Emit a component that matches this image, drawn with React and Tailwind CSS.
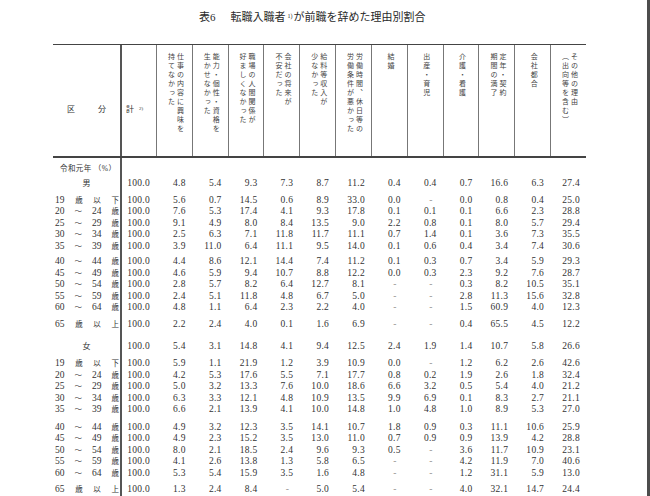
import React from "react";

// 表6 転職入職者が前職を辞めた理由別割合
const heads = [
  ["仕事の内容に興味を", "持てなかった"],
  ["能力・個性・資格を", "生かせなかった"],
  ["職場の人間関係が", "好ましくなかった"],
  ["会社の将来が", "不安だった"],
  ["給料等収入が", "少なかった"],
  ["労働時間、休日等の", "労働条件が悪かった"],
  ["結婚"],
  ["出産・育児"],
  ["介護・看護"],
  ["定年・契約", "期間の満了"],
  ["会社都合"],
  ["その他の理由", "（出向等を含む）"],
];

const ages = [
  ["19", "歳", "以", "下"],
  ["20", "～", "24", "歳"],
  ["25", "～", "29", "歳"],
  ["30", "～", "34", "歳"],
  ["35", "～", "39", "歳"],
  ["40", "～", "44", "歳"],
  ["45", "～", "49", "歳"],
  ["50", "～", "54", "歳"],
  ["55", "～", "59", "歳"],
  ["60", "～", "64", "歳"],
  ["65", "歳", "以", "上"],
];

const men = {
  label: "男",
  total: "100.0 4.8 5.4 9.3 7.3 8.7 11.2 0.4 0.4 0.7 16.6 6.3 27.4",
  rows: [
    "100.0 5.6 0.7 14.5 0.6 8.9 33.0 0.0 - 0.0 0.8 0.4 25.0",
    "100.0 7.6 5.3 17.4 4.1 9.3 17.8 0.1 0.1 0.1 6.6 2.3 28.8",
    "100.0 9.1 4.9 8.0 8.4 13.5 9.0 2.2 0.8 0.1 8.0 5.7 29.4",
    "100.0 2.5 6.3 7.1 11.8 11.7 11.1 0.7 1.4 0.1 3.6 7.3 35.5",
    "100.0 3.9 11.0 6.4 11.1 9.5 14.0 0.1 0.6 0.4 3.4 7.4 30.6",
    "100.0 4.4 8.6 12.1 14.4 7.4 11.2 0.1 0.3 0.7 3.4 5.9 29.3",
    "100.0 4.6 5.9 9.4 10.7 8.8 12.2 0.0 0.3 2.3 9.2 7.6 28.7",
    "100.0 2.8 5.7 8.2 6.4 12.7 8.1 - - 0.3 8.2 10.5 35.1",
    "100.0 2.4 5.1 11.8 4.8 6.7 5.0 - - 2.8 11.3 15.6 32.8",
    "100.0 4.8 1.1 6.4 2.3 2.2 4.0 - - 1.5 60.9 4.0 12.3",
    "100.0 2.2 2.4 4.0 0.1 1.6 6.9 - - 0.4 65.5 4.5 12.2",
  ],
  pads: ["pt-[3.5px]", "pt-[5.2px]", "pt-[3.8px]", "pt-[5.5px]"],
};

const women = {
  label: "女",
  total: "100.0 5.4 3.1 14.8 4.1 9.4 12.5 2.4 1.9 1.4 10.7 5.8 26.6",
  rows: [
    "100.0 5.9 1.1 21.9 1.2 3.9 10.9 0.0 - 1.2 6.2 2.6 42.6",
    "100.0 4.2 5.3 17.6 5.5 7.1 17.7 0.8 0.2 1.9 2.6 1.8 32.4",
    "100.0 5.0 3.2 13.3 7.6 10.0 18.6 6.6 3.2 0.5 5.4 4.0 21.2",
    "100.0 6.3 3.3 12.1 4.8 10.9 13.5 9.9 6.9 0.1 8.3 2.7 21.1",
    "100.0 6.6 2.1 13.9 4.1 10.0 14.8 1.0 4.8 1.0 8.9 5.3 27.0",
    "100.0 4.9 3.2 12.3 3.5 14.1 10.7 1.8 0.9 0.3 11.1 10.6 25.9",
    "100.0 4.9 2.3 15.2 3.5 13.0 11.0 0.7 0.9 0.9 13.9 4.2 28.8",
    "100.0 8.0 2.1 18.5 2.4 9.6 9.3 0.5 - 3.6 11.7 10.9 23.1",
    "100.0 4.1 2.6 13.8 1.3 5.8 6.5 - - 4.2 11.9 7.0 40.6",
    "100.0 5.3 5.4 15.9 3.5 1.6 4.8 - - 1.2 31.1 5.9 13.0",
    "100.0 1.3 2.4 8.4 - 5.0 5.4 - - 4.0 32.1 14.7 24.4",
  ],
  pads: ["pt-[10.2px]", "pt-[5.8px]", "pt-[6.2px]", "pt-[4.8px]"],
};

const cols = "grid grid-cols-[67px_36px_repeat(12,minmax(0,1fr))]";

function Row({ label, vals, pad = "" }) {
  return (
    <div className={`${cols} leading-[11.5px]`}>
      <div className={pad}>{label}</div>
      {vals.map((v, i) => (
        <div
          key={i}
          className={`${pad} text-right text-[9.5px] tracking-[0.3px] ${
            i === 0 ? "border-l-2 border-[#555]" : ""
          } ${v === "-" ? "pr-[10px] text-[#999]" : "pr-[6px]"}`}
        >
          {v}
        </div>
      ))}
    </div>
  );
}

function AgeLabel({ parts }) {
  return (
    <div className="flex justify-between pl-[2px] pr-[1px]">
      {parts.map((p, i) => (
        <span key={i} className={/\d/.test(p) ? "text-[9.5px]" : "text-[7.5px]"}>
          {p}
        </span>
      ))}
    </div>
  );
}

function Block({ data }) {
  return (
    <>
      <Row
        label={<div className="text-center text-[8px]">{data.label}</div>}
        vals={data.total.split(" ")}
        pad={data.pads[0]}
      />
      {ages.map((a, i) => (
        <Row
          key={i}
          label={<AgeLabel parts={a} />}
          vals={data.rows[i].split(" ")}
          pad={i === 0 ? data.pads[1] : i === 5 ? data.pads[2] : i === 10 ? data.pads[3] : ""}
        />
      ))}
    </>
  );
}

export default function App() {
  return (
    <div className="w-[650px] h-[496px] overflow-hidden bg-white flex text-[#333] font-['Liberation_Serif','Noto_Sans_CJK_JP',serif]">
      <div className="flex-1 min-w-0">
        <div className="h-[44px] pt-[10px] pl-[199px] text-[11px] leading-[14px] text-[#2a2a2a]">
          表6<span className="ml-[15px]">転職入職者</span>
          <sup className="text-[6px] ml-[2px] mr-[1px]">1)</sup>が前職を辞めた理由別割合
        </div>

        <div className="ml-[53px] w-[533px]">
          <div className={`${cols} h-[114px] border-t border-b-2 border-[#444]`}>
            <div className="flex justify-between px-[14px] pt-[60px] text-[8px] leading-[10px]">
              <span>区</span>
              <span>分</span>
            </div>
            <div className="border-l-2 border-[#555] pl-[4px] pt-[60px] text-[8px] leading-[10px]">
              計<sup className="text-[5px] ml-[5px]">2)</sup>
            </div>
            {heads.map((h, i) => (
              <div key={i} className="border-l border-[#777] flex justify-center pt-[8px]">
                <div className="[writing-mode:vertical-rl] h-[100px] text-[7px] tracking-[2px] leading-[9px] text-[#444]">
                  {h.map((l, j) => (
                    <React.Fragment key={j}>
                      {j > 0 && <br />}
                      {l}
                    </React.Fragment>
                  ))}
                </div>
              </div>
            ))}
          </div>

          <Row
            label={<div className="pl-[7px] text-[7.5px] tracking-[0.4px]">令和元年 （%）</div>}
            vals={Array(13).fill("")}
            pad="pt-[5.25px]"
          />
          <Block data={men} />
          <Block data={women} />
        </div>
      </div>
      <div className="w-[3px] bg-[#4d4d4d]" />
    </div>
  );
}
